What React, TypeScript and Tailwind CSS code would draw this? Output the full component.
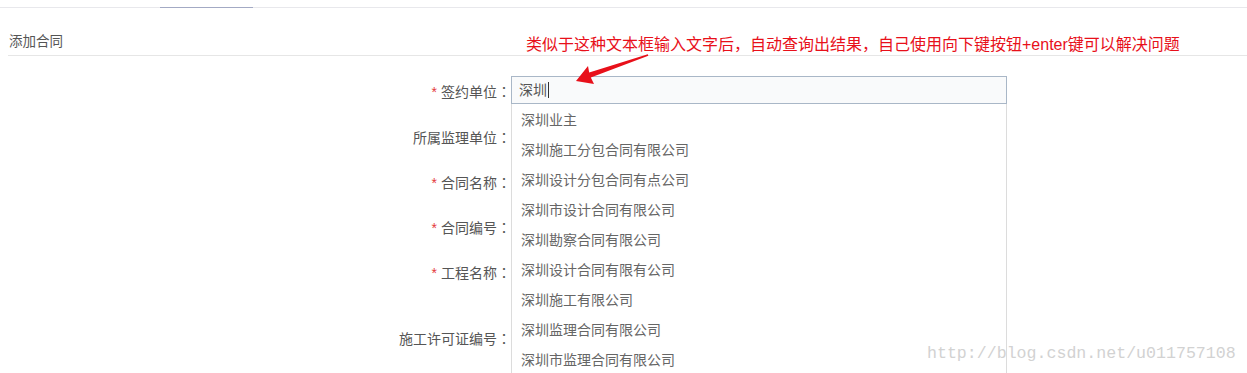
import React from 'react';

const suggestions = [
  '深圳业主',
  '深圳施工分包合同有限公司',
  '深圳设计分包合同有点公司',
  '深圳市设计合同有限公司',
  '深圳勘察合同有限公司',
  '深圳设计合同有限有公司',
  '深圳施工有限公司',
  '深圳监理合同有限公司',
  '深圳市监理合同有限公司',
];

// label, required, top margin before the row
const fields: { label: string; required: boolean; mt: string }[] = [
  { label: '签约单位', required: true, mt: 'mt-[20px]' },
  { label: '所属监理单位', required: false, mt: 'mt-[18px]' },
  { label: '合同名称', required: true, mt: 'mt-[17px]' },
  { label: '合同编号', required: true, mt: 'mt-[17px]' },
  { label: '工程名称', required: true, mt: 'mt-[17px]' },
  { label: '施工许可证编号', required: false, mt: 'mt-[38px]' },
];

function Arrow() {
  return (
    <svg
      className="absolute left-0 top-0 pointer-events-none z-20"
      width="1247"
      height="373"
      viewBox="0 0 1247 373"
    >
      <polygon
        points="647.8,54.3 589.2,72.6 588,66 576,81 594,84 590.8,77.4 648.3,55.7"
        fill="#e8101a"
      />
    </svg>
  );
}

export default function App() {
  return (
    <div className="relative w-[1247px] h-[373px] overflow-hidden bg-white text-[#555] font-['Liberation_Sans','Noto_Sans_CJK_SC',sans-serif]">
      {/* Tab strip */}
      <div className="h-[7px]" />
      <div className="h-px bg-[#e8e8ec]">
        <div className="ml-[160px] w-[93px] h-px bg-[#a3aac4]" />
      </div>

      {/* Header */}
      <div className="ml-2 h-[48px] border-b border-[#e6e6e6] flex items-end">
        <span className="w-[518px] pl-px pb-[4px] text-[13.5px] leading-[18px]">添加合同</span>
        <span className="text-[16px] leading-[20px] text-[#e8101a]">
          类似于这种文本框输入文字后，自动查询出结果，自己使用向下键按钮+enter键可以解决问题
        </span>
      </div>

      {/* Form */}
      <div className="flex flex-col">
        {fields.map((f, i) => (
          <div key={f.label} className={`${f.mt} flex items-center h-[28px]`}>
            <label className="w-[511px] pt-[2px] text-right text-[14px] leading-[26px] text-[#555]">
              {f.required && <span className="text-[#e4393c] mr-[4px]">*</span>}
              {f.label}
              <span className="font-['Noto_Sans_CJK_TC',sans-serif]">：</span>
            </label>
            <div className="relative w-[496px] h-[28px]">
              {i === 0 ? (
                <>
                  <div className="h-full border border-[#a9b7c7] bg-[#f9fafb] pl-[7px] flex items-center text-[14px] text-[#555]">
                    深圳
                    <span className="ml-px w-px h-[16px] bg-[#333]" />
                  </div>
                  <ul className="absolute left-0 top-full w-[496px] h-[300px] pt-px border-x border-[#dcdcdc] bg-white z-10">
                    {suggestions.map((s) => (
                      <li key={s} className="h-[30px] pl-[9px] text-[14px] leading-[30px] text-[#666]">
                        {s}
                      </li>
                    ))}
                  </ul>
                </>
              ) : (
                <div className="h-full border border-[#ddd] bg-white" />
              )}
            </div>
          </div>
        ))}
      </div>

      <Arrow />

      {/* Watermark */}
      <span className="absolute left-[927px] top-[343px] z-20 text-[16.6px] leading-[22px] text-[#d2d2d2] font-['Liberation_Mono',monospace] pointer-events-none">
        http://blog.csdn.net/u011757108
      </span>
    </div>
  );
}
